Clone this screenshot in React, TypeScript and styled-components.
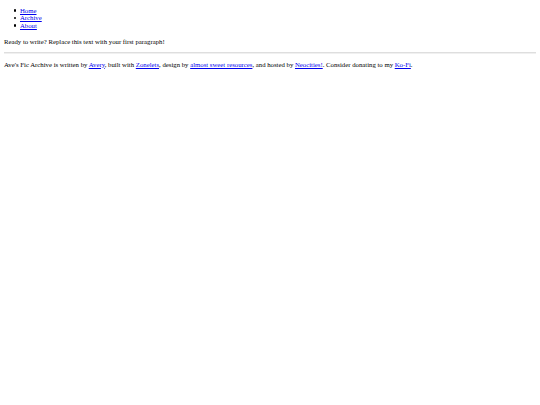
import React from "react";
import styled, { createGlobalStyle } from "styled-components";

const Global = createGlobalStyle`
  html, body { background: #ffffff; }
  body {
    margin: 0;
    padding: 4px;
    font-family: "Liberation Serif", "Times New Roman", serif;
    font-size: 6.75px;
    line-height: 7.4px;
    color: #000000;
  }
`;

const NavList = styled.ul`
  margin: 2.8px 0 9.4px;
  padding: 0;
  list-style: none;
`;

const NavItem = styled.li`
  display: flex;
  align-items: center;
  padding-left: 9.8px;
`;

const Bullet = styled.span`
  flex: none;
  width: 2.4px;
  height: 2.4px;
  border-radius: 50%;
  background: #000000;
  margin-right: 3.8px;
`;

const Link = styled.a`
  color: #0000ee;
  text-decoration: underline;
`;

const Paragraph = styled.p`
  margin: 6.4px 0;
`;

const Rule = styled.hr`
  margin: 3.2px 0;
  border: none;
  border-top: 1px solid #dedede;
  border-bottom: 0.5px solid #f0f0f0;
`;

const items = ["Home", "Archive", "About"];

export default function App() {
  return (
    <>
      <Global />
      <header>
        <nav>
          <NavList>
            {items.map((label) => (
              <NavItem key={label}>
                <Bullet />
                <Link href="#">{label}</Link>
              </NavItem>
            ))}
          </NavList>
        </nav>
      </header>
      <main>
        <Paragraph>Ready to write? Replace this text with your first paragraph!</Paragraph>
      </main>
      <Rule />
      <footer>
        <Paragraph>
          Ave's Fic Archive is written by <Link href="#">Avery</Link>, built with{" "}
          <Link href="#">Zonelets</Link>, design by <Link href="#">almost sweet resources</Link>, and
          hosted by <Link href="#">Neocities!</Link>. Consider donating to my <Link href="#">Ko-Fi</Link>.
        </Paragraph>
      </footer>
    </>
  );
}
